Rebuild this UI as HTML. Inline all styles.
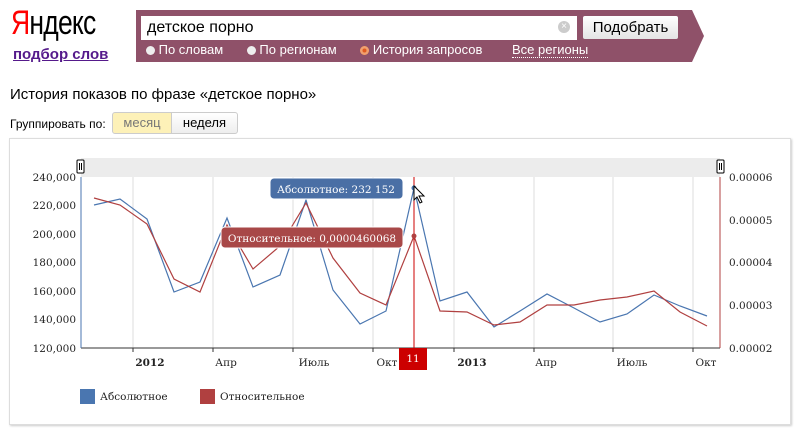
<!DOCTYPE html>
<html><head><meta charset="utf-8"><style>
body{margin:0;width:800px;height:436px;background:#fff;font-family:"Liberation Sans","DejaVu Sans",sans-serif;position:relative;overflow:hidden}
.a{position:absolute}
</style></head><body>
<div class="a" style="left:11px;top:3px;font-size:34px;letter-spacing:-1px;color:#000;line-height:40px;transform:scaleX(0.78);transform-origin:0 0"><span style="color:#f00">Я</span>ндекс</div>
<div class="a" style="left:13px;top:46px;font-size:15px;font-weight:bold;color:#551a8b;text-decoration:underline">подбор слов</div>
<svg class="a" style="left:136px;top:10px" width="570" height="53"><polygon points="0,0 556,0 568,26 556,52 0,52" fill="#8f5169"/></svg>
<div class="a" style="left:141px;top:16px;width:436px;height:24px;background:#fff;font-size:16px;line-height:24px;text-indent:6px">детское порно</div>
<div class="a" style="left:558px;top:21px;width:12px;height:12px;border-radius:50%;background:#ccc;color:#fff;font-size:10px;line-height:12px;text-align:center">×</div>
<div class="a" style="left:583px;top:16px;width:95px;height:23px;background:linear-gradient(#fff,#e4e4e4);border-radius:2px;font-size:15px;line-height:23px;text-align:center">Подобрать</div>
<div class="a" style="left:146px;top:42px;font-size:13px;color:#fff;line-height:16px;white-space:nowrap">
<span style="display:inline-block;width:9px;height:9px;border-radius:50%;background:#eee;vertical-align:-1px"></span> По словам
<span style="display:inline-block;width:9px;height:9px;border-radius:50%;background:#eee;vertical-align:-1px;margin-left:20px"></span> По регионам
<span style="display:inline-block;width:9px;height:9px;border-radius:50%;background:#eee;vertical-align:-1px;margin-left:20px;box-shadow:inset 0 0 0 2.5px #f0a070;background:#e05a20"></span> История запросов
<span style="margin-left:26px;border-bottom:1px dotted #fff">Все регионы</span></div>
<div class="a" style="left:10px;top:86px;font-size:15px">История показов по фразе «детское порно»</div>
<div class="a" style="left:10px;top:117px;font-size:12px">Группировать по:</div>
<div class="a" style="left:112px;top:112px;width:58px;height:20px;background:#fdf1b8;border:1px solid #ccc;border-radius:3px 0 0 3px;font-size:13px;line-height:20px;text-align:center;color:#777">месяц</div>
<div class="a" style="left:171px;top:112px;width:65px;height:20px;background:linear-gradient(#fff,#eee);border:1px solid #ccc;border-radius:0 3px 3px 0;font-size:13px;line-height:20px;text-align:center">неделя</div>
<div class="a" style="left:9px;top:138px;width:780px;height:285px;border:1px solid #ddd;box-shadow:1px 1px 2px #ccc"></div>
<svg class="a" style="left:0;top:0" width="800" height="436" font-family="DejaVu Serif,Liberation Serif,serif" font-size="10.5">
<rect x="81" y="158" width="639" height="19" fill="#ececec"/>
<g stroke="#ddd"><line x1="133" y1="177" x2="133" y2="348"/><line x1="213" y1="177" x2="213" y2="348"/><line x1="293" y1="177" x2="293" y2="348"/><line x1="373" y1="177" x2="373" y2="348"/><line x1="454" y1="177" x2="454" y2="348"/><line x1="534" y1="177" x2="534" y2="348"/><line x1="613" y1="177" x2="613" y2="348"/><line x1="693" y1="177" x2="693" y2="348"/></g>
<line x1="81" y1="348" x2="720" y2="348" stroke="#333"/>
<line x1="81" y1="177" x2="81" y2="348" stroke="#4a76b0"/>
<line x1="720" y1="177" x2="720" y2="348" stroke="#b04040"/>
<g stroke="#333"><line x1="133" y1="348" x2="133" y2="352"/><line x1="213" y1="348" x2="213" y2="352"/><line x1="293" y1="348" x2="293" y2="352"/><line x1="373" y1="348" x2="373" y2="352"/><line x1="454" y1="348" x2="454" y2="352"/><line x1="534" y1="348" x2="534" y2="352"/><line x1="613" y1="348" x2="613" y2="352"/><line x1="693" y1="348" x2="693" y2="352"/></g>
<g fill="#222" text-anchor="end"><text x="76" y="181">240,000</text><text x="76" y="209">220,000</text><text x="76" y="238">200,000</text><text x="76" y="266">180,000</text><text x="76" y="295">160,000</text><text x="76" y="323">140,000</text><text x="76" y="352">120,000</text></g>
<g fill="#222"><text x="729" y="181">0.00006</text><text x="729" y="224">0.00005</text><text x="729" y="266">0.00004</text><text x="729" y="309">0.00003</text><text x="729" y="352">0.00002</text></g>
<g fill="#222" text-anchor="middle"><text x="150" y="366" font-weight="bold">2012</text><text x="226" y="366">Апр</text><text x="314" y="366">Июль</text><text x="387" y="366">Окт</text><text x="472" y="366" font-weight="bold">2013</text><text x="546" y="366">Апр</text><text x="632" y="366">Июль</text><text x="706" y="366">Окт</text></g>
<polyline fill="none" stroke="#4a76b0" stroke-width="1.2" points="94,205 120,199 147,219 174,292 200,282 227,218 253,287 280,275 306,200 333,290 360,324 386,311 414,188 440,301 467,292 494,327 520,311 547,294 574,308 600,322 627,314 654,295 680,306 707,316"/>
<polyline fill="none" stroke="#b04040" stroke-width="1.2" points="94,198 120,205 147,224 174,279 200,292 227,225 253,269 280,246 306,203 333,258 360,293 386,305 414,236 440,311 467,312 494,325 520,322 547,305 574,305 600,300 627,297 654,291 680,312 707,326"/>
<line x1="414" y1="177" x2="414" y2="348" stroke="#c00"/>
<circle cx="414" cy="188" r="2.5" fill="#4a76b0"/><circle cx="414" cy="236" r="2.5" fill="#b04040"/>
<rect x="399" y="348" width="28" height="22" fill="#c00"/><text x="413" y="362" fill="#fff" text-anchor="middle">11</text>
<rect x="270" y="178" width="133" height="21" rx="4" fill="#4a6fa5" stroke="#fff"/><text x="336" y="193" fill="#fff" text-anchor="middle">Абсолютное: 232 152</text>
<rect x="221" y="227" width="182" height="21" rx="4" fill="#a84848" stroke="#fff"/><text x="312" y="242" fill="#fff" text-anchor="middle">Относительное: 0,0000460068</text>
<path d="M414,186 l0,14 l3,-3 l3,6 l2,-1 l-3,-6 l5,0 z" fill="#fff" stroke="#000"/>
<rect x="77" y="160" width="7" height="13" rx="1" fill="#fff" stroke="#000"/><line x1="79.5" y1="163" x2="79.5" y2="170" stroke="#000"/><line x1="81.5" y1="163" x2="81.5" y2="170" stroke="#000"/>
<rect x="717" y="160" width="7" height="13" rx="1" fill="#fff" stroke="#000"/><line x1="719.5" y1="163" x2="719.5" y2="170" stroke="#000"/><line x1="721.5" y1="163" x2="721.5" y2="170" stroke="#000"/>
<rect x="80" y="389" width="15" height="15" fill="#4a76b0"/><text x="100" y="400" fill="#222">Абсолютное</text>
<rect x="200" y="389" width="15" height="15" fill="#b04040"/><text x="220" y="400" fill="#222">Относительное</text>
</svg>
</body></html>
